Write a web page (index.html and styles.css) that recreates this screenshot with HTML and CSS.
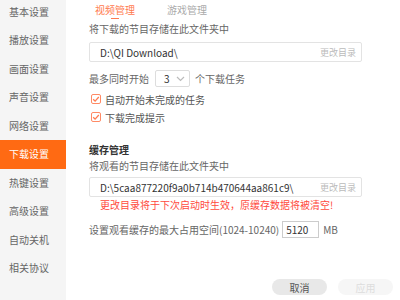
FILE: index.html
```html
<!DOCTYPE html>
<html lang="zh-CN">

<head>
  <meta charset="UTF-8">
  <title>设置</title>
  <link rel="stylesheet" href="styles.css">
</head>

<body>
  <div class="window">

    <!-- Side menu -->
    <ul class="side-menu">
      <li>基本设置</li>
      <li>播放设置</li>
      <li>画面设置</li>
      <li>声音设置</li>
      <li>网络设置</li>
      <li class="active">下载设置</li>
      <li>热键设置</li>
      <li>高级设置</li>
      <li>自动关机</li>
      <li>相关协议</li>
    </ul>

    <!-- Download settings -->
    <div class="panel">
      <div class="tabs">
        <span class="tab current">视频管理</span>
        <span class="tab">游戏管理</span>
      </div>

      <p class="label">将下载的节目存储在此文件夹中</p>
      <div class="path-box">
        <span class="path">D:\QI Download\</span>
        <span class="change">更改目录</span>
      </div>

      <div class="row count-row">
        <span>最多同时开始</span>
        <span class="select">3
          <svg width="9" height="6" viewBox="0 0 9 6"><path d="M1 1l3.5 3.5L8 1" fill="none" stroke="#bbb" stroke-width="1.2"/></svg>
        </span>
        <span>个下载任务</span>
      </div>

      <label class="check-row first">
        <span class="check"><svg width="8" height="8" viewBox="0 0 8 8"><path d="M1.2 4.2l1.9 1.9L6.8 2" fill="none" stroke="#ff7a4f" stroke-width="1.3"/></svg></span>
        自动开始未完成的任务
      </label>
      <label class="check-row">
        <span class="check"><svg width="8" height="8" viewBox="0 0 8 8"><path d="M1.2 4.2l1.9 1.9L6.8 2" fill="none" stroke="#ff7a4f" stroke-width="1.3"/></svg></span>
        下载完成提示
      </label>

      <h3 class="section-title">缓存管理</h3>
      <p class="label">将观看的节目存储在此文件夹中</p>
      <div class="path-box cache">
        <span class="path">D:\5caa877220f9a0b714b470644aa861c9\</span>
        <span class="change">更改目录</span>
      </div>
      <p class="warning">更改目录将于下次启动时生效，原缓存数据将被清空!</p>

      <div class="row size-row">
        <span>设置观看缓存的最大占用空间(1024-10240)</span>
        <span class="size-input">5120</span>
        <span class="unit">MB</span>
      </div>

      <div class="buttons">
        <button class="btn">取消</button>
        <button class="btn disabled">应用</button>
      </div>
    </div>
  </div>
</body>

</html>
```

FILE: styles.css
```css
/* Reset */
* {
  margin: 0;
  padding: 0;
  box-sizing: border-box;
}

body {
  font-family: "Noto Sans CJK SC", "Noto Sans", sans-serif;
  font-size: 10px;
  color: #666;
  background-color: #fff;
}

.window {
  display: flex;
  width: 400px;
  height: 300px;
  overflow: hidden;
}

/* Side menu */
.side-menu {
  list-style: none;
  width: 66px;
  flex-shrink: 0;
  background-color: #f5f5f5;
  padding-top: 0;
}

.side-menu li {
  height: 28.5px;
  line-height: 28.5px;
  padding-left: 9px;
  color: #666;
  white-space: nowrap;
}

.side-menu li:first-child {
  margin-top: -2.5px;
}

.side-menu li.active {
  background-color: #ff6a13;
  color: #fff;
}

/* Panel */
.panel {
  flex: 1;
  padding: 0 7px 0 23px;
}

.tabs {
  display: flex;
  height: 20px;
  padding-left: 6px;
  gap: 32px;
}

.tab {
  position: relative;
  line-height: 20px;
  color: #aaa;
}

.tab.current {
  color: #ff7a4f;
}

.tab.current::after {
  content: "";
  position: absolute;
  left: 50%;
  bottom: 1px;
  width: 8px;
  height: 1px;
  margin-left: -4px;
  background-color: #ff7a4f;
}

.label {
  height: 14px;
  line-height: 14px;
  margin-top: 2px;
  color: #666;
}

.path-box {
  display: flex;
  justify-content: space-between;
  align-items: center;
  width: 273px;
  height: 20px;
  margin-top: 6px;
  padding: 0 5px 0 10px;
  border: 1px solid #e3e3e3;
  border-radius: 2px;
  color: #333;
}

.path-box.cache {
  margin-top: 4px;
}

.change {
  font-size: 9px;
  color: #bbb;
}

.row {
  display: flex;
  align-items: center;
}

.count-row {
  height: 17px;
  margin-top: 8px;
}

.select {
  display: flex;
  justify-content: space-between;
  align-items: center;
  width: 35px;
  height: 17px;
  margin: 0 5px 0 6px;
  padding: 0 4px 0 8px;
  border: 1px solid #ddd;
  border-radius: 2px;
  color: #333;
}

.check-row {
  display: flex;
  align-items: center;
  height: 18px;
  padding-left: 2px;
  color: #555;
}

.check-row.first {
  margin-top: 3px;
}

.check {
  display: flex;
  justify-content: center;
  align-items: center;
  width: 10px;
  height: 10px;
  margin-right: 4px;
  border: 1px solid #ff8a65;
  border-radius: 2px;
}

.section-title {
  height: 14px;
  line-height: 14px;
  margin-top: 17px;
  font-size: 10px;
  font-weight: bold;
  color: #333;
}

.warning {
  height: 14px;
  line-height: 14px;
  margin-top: 1px;
  padding-left: 11px;
  color: #ff4a3d;
}

.size-row {
  height: 17px;
  margin-top: 9px;
}

.size-input {
  width: 37px;
  height: 17px;
  line-height: 15px;
  margin: 0 4px 0 3px;
  padding-left: 3px;
  border: 1px solid #ccc;
  color: #333;
}

.unit {
  color: #666;
}

/* Buttons */
.buttons {
  display: flex;
  justify-content: flex-end;
  gap: 11px;
  margin-top: 41px;
}

.btn {
  width: 55px;
  height: 16px;
  border: none;
  border-radius: 8px;
  background-color: #e8e8e8;
  color: #555;
  font-family: inherit;
  font-size: 10px;
}

.btn.disabled {
  background-color: #f6f6f6;
  color: #ddd;
}
```
